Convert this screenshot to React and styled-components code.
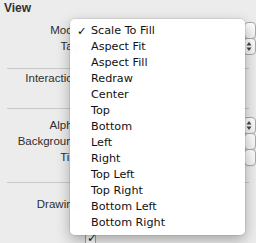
import React from "react";
import styled, { createGlobalStyle } from "styled-components";

const Global = createGlobalStyle`
  html, body { margin: 0; padding: 0; background: #ececec; }
  body { font-family: "Liberation Sans", Arial, sans-serif; }
`;

const Page = styled.div`
  position: relative;
  width: 256px;
  height: 243px;
  overflow: hidden;
  background: #ececec;
  color: #2a2a2a;
`;

const Inspector = styled.div`
  display: flex;
  flex-direction: column;
`;

const Header = styled.div`
  height: 22px;
  padding: 1px 0 0 4px;
  box-sizing: border-box;
  font-size: 12px;
  font-weight: bold;
  line-height: 14px;
  color: #333;
`;

const Section = styled.div`
  display: flex;
  flex-direction: column;
  padding-top: ${(p) => p.$pt}px;
  padding-bottom: ${(p) => p.$pb}px;
`;

const Separator = styled.div`
  height: 1px;
  margin: 0 7px;
  background: #c9c9c9;
`;

const Row = styled.div`
  display: grid;
  grid-template-columns: 79px 1fr 12px;
  align-items: center;
  height: 16px;
`;

const Label = styled.div`
  text-align: right;
  font-size: 11.5px;
  line-height: 16px;
  white-space: nowrap;
  color: #2e2e2e;
`;

const Cell = styled.div`
  display: flex;
  align-items: center;
  height: 16px;
`;

const Popup = styled.div`
  width: 30px;
  height: 17px;
  box-sizing: border-box;
  border: 1px solid #a9a9a9;
  border-radius: 4px;
  background: linear-gradient(#ffffff, #f1f1f1);
  box-shadow: 0 1px 0 rgba(0, 0, 0, 0.05);
`;

const Stepper = styled.div`
  width: 30px;
  height: 17px;
  margin-left: -1px;
  box-sizing: border-box;
  border: 1px solid #a9a9a9;
  border-radius: 4px;
  background: linear-gradient(#ffffff, #f1f1f1);
  display: flex;
  flex-direction: column;
  justify-content: center;
  padding-left: 2px;
`;

const Checkbox = styled.div`
  width: 11px;
  height: 11px;
  margin: 6px 0 0 6px;
  box-sizing: border-box;
  border: 1px solid #a0a0a0;
  border-radius: 2px;
  background: #fafafa;
  position: relative;
`;

const CheckMark = styled.span`
  position: absolute;
  left: 1px;
  top: -4px;
  font-size: 12px;
  font-weight: bold;
  color: #222;
  font-family: "DejaVu Sans", sans-serif;
`;

const Menu = styled.div`
  position: absolute;
  left: 70px;
  top: 19px;
  width: 175px;
  padding: 4px 0;
  box-sizing: border-box;
  background: rgba(255, 255, 255, 0.98);
  border-radius: 5px;
  box-shadow: 0 0 0 1px rgba(0, 0, 0, 0.07), 0 5px 14px rgba(0, 0, 0, 0.3);
  display: flex;
  flex-direction: column;
`;

const Item = styled.div`
  position: relative;
  height: 16px;
  line-height: 16px;
  padding-left: 21px;
  font-family: "DejaVu Sans", "Liberation Sans", sans-serif;
  font-size: 11.2px;
  color: #111;
  white-space: nowrap;
`;

const Tick = styled.span`
  position: absolute;
  left: 7px;
  top: 0;
  font-size: 11.5px;
`;

const StepArrows = () => (
  <svg width="6" height="11" viewBox="0 0 6 11">
    <path d="M3 1 L5.5 4.5 L0.5 4.5 Z" fill="#444" />
    <path d="M3 10 L5.5 6.5 L0.5 6.5 Z" fill="#444" />
  </svg>
);

const items = [
  "Scale To Fill",
  "Aspect Fit",
  "Aspect Fill",
  "Redraw",
  "Center",
  "Top",
  "Bottom",
  "Left",
  "Right",
  "Top Left",
  "Top Right",
  "Bottom Left",
  "Bottom Right",
];

export default function App() {
  return (
    <Page>
      <Global />
      <Inspector>
        <Header>View</Header>
        <Section $pt={0} $pb={14}>
          <Row>
            <Label>Mode</Label>
            <Cell />
            <Cell>
              <Popup />
            </Cell>
          </Row>
          <Row>
            <Label>Tag</Label>
            <Cell />
            <Cell>
              <Stepper>
                <StepArrows />
              </Stepper>
            </Cell>
          </Row>
        </Section>
        <Separator />
        <Section $pt={1} $pb={6}>
          <Row>
            <Label>Interaction</Label>
            <Cell>
              <Checkbox />
            </Cell>
            <Cell />
          </Row>
          <Row>
            <Label />
            <Cell>
              <Checkbox />
            </Cell>
            <Cell />
          </Row>
        </Section>
        <Separator />
        <Section $pt={8} $pb={17}>
          <Row>
            <Label>Alpha</Label>
            <Cell />
            <Cell>
              <Stepper>
                <StepArrows />
              </Stepper>
            </Cell>
          </Row>
          <Row>
            <Label>Background</Label>
            <Cell />
            <Cell>
              <Popup />
            </Cell>
          </Row>
          <Row>
            <Label>Tint</Label>
            <Cell />
            <Cell>
              <Popup />
            </Cell>
          </Row>
        </Section>
        <Separator />
        <Section $pt={13} $pb={0}>
          <Row>
            <Label>Drawing</Label>
            <Cell>
              <Checkbox />
            </Cell>
            <Cell />
          </Row>
          <Row>
            <Label />
            <Cell>
              <Checkbox />
            </Cell>
            <Cell />
          </Row>
          <Row>
            <Label />
            <Cell>
              <Checkbox>
                <CheckMark>✓</CheckMark>
              </Checkbox>
            </Cell>
            <Cell />
          </Row>
        </Section>
      </Inspector>
      <Menu>
        {items.map((t, i) => (
          <Item key={t}>
            {i === 0 && <Tick>✓</Tick>}
            {t}
          </Item>
        ))}
      </Menu>
    </Page>
  );
}
